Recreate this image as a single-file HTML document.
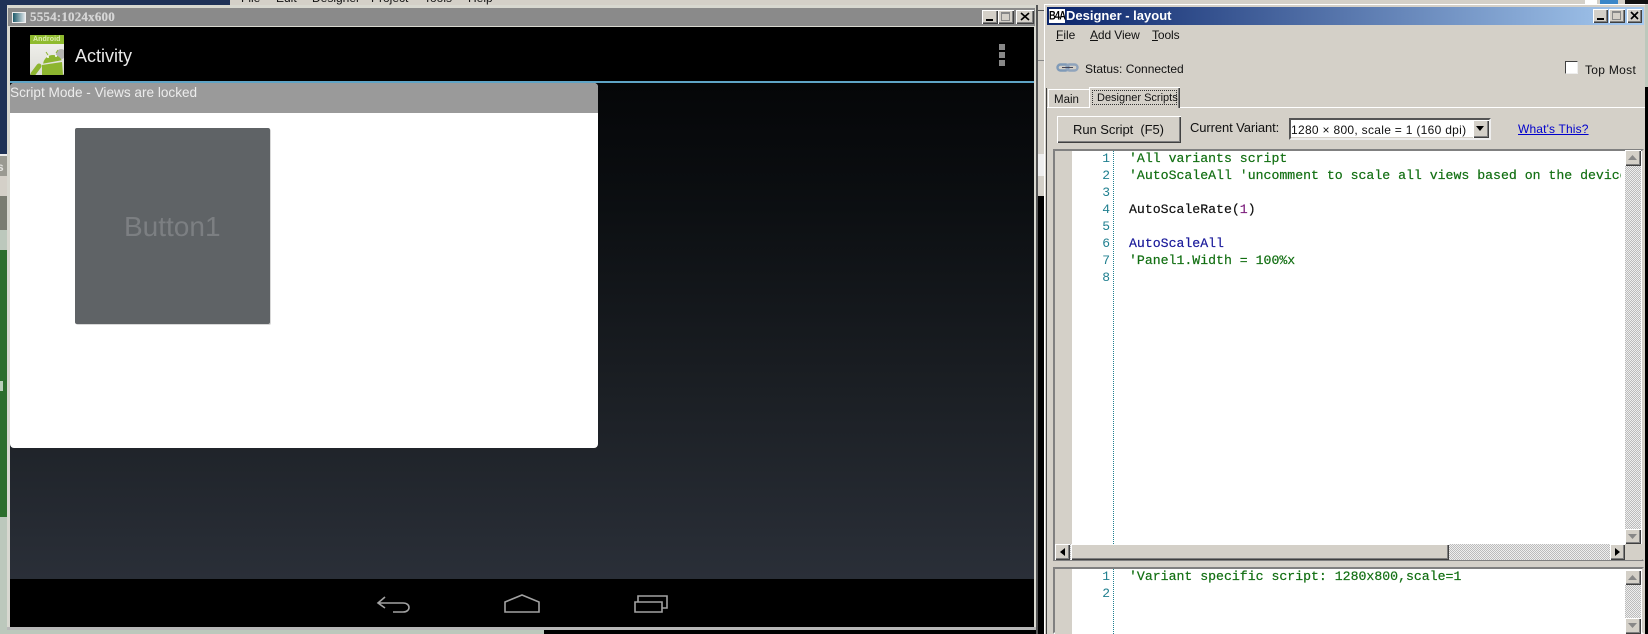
<!DOCTYPE html>
<html><head><meta charset="utf-8"><style>
html,body{margin:0;padding:0;background:#bcc8bc}
body{width:1648px;height:634px;position:relative;overflow:hidden;font-family:"Liberation Sans",sans-serif}
div,span,a,svg{position:absolute;display:block}
span,a{white-space:pre;line-height:14px}
.t{font-size:12px;color:#111;height:14px}
.u{display:inline;position:static;text-decoration:underline}
.r{background:#d4d0c8;box-shadow:inset 1px 1px 0 #fff,inset -1px -1px 0 #404040,inset -2px -2px 0 #808080}
.m{font-family:"Liberation Mono",monospace;font-size:13.2px;line-height:17px;left:1129px;height:17px;-webkit-text-stroke:.2px currentColor}
.n{font-family:"Liberation Mono",monospace;font-size:13px;line-height:17px;width:30px;left:1080px;text-align:right;color:#1f7f8f;height:17px}
.chk{background-color:#eee;background-image:linear-gradient(45deg,#bbb 25%,transparent 25%,transparent 75%,#bbb 75%),linear-gradient(45deg,#bbb 25%,transparent 25%,transparent 75%,#bbb 75%);background-size:2px 2px;background-position:0 0,1px 1px}
</style></head><body>
<!-- background strips -->
<div style="left:0;top:0;width:230px;height:6px;background:#1f3257"></div>
<div style="left:230px;top:0;width:1418px;height:5px;background:#d4d0c8"></div>
<span class="t" style="left:241px;top:-9px;">File</span><span class="t" style="left:276px;top:-9px;">Edit</span><span class="t" style="left:312px;top:-9px;">Designer</span><span class="t" style="left:371px;top:-9px;">Project</span><span class="t" style="left:424px;top:-9px;">Tools</span><span class="t" style="left:468px;top:-9px;">Help</span>
<div style="left:1585px;top:0;width:12px;height:4px;background:#fff"></div>
<div style="left:1600px;top:0;width:18px;height:4px;background:#3a86c8"></div>
<div style="left:1625px;top:0;width:23px;height:4px;background:#111"></div>
<div style="left:0;top:0;width:8px;height:154px;background:#1f3257"></div>
<div style="left:0;top:154px;width:8px;height:2px;background:#eee"></div>
<div style="left:0;top:156px;width:8px;height:20px;background:#9a9a92"></div>
<span style="left:-3px;top:160px;font:bold 12px/14px 'Liberation Sans',sans-serif;color:#e4e4e0;width:11px;overflow:hidden">s</span>
<div style="left:0;top:176px;width:8px;height:20px;background:#d4d0c8"></div>
<div style="left:0;top:196px;width:8px;height:34px;background:#7a7d72"></div>
<div style="left:0;top:230px;width:8px;height:20px;background:#bcc8bc"></div>
<div style="left:0;top:250px;width:8px;height:267px;background:#2c6e2c"></div>
<div style="left:0;top:517px;width:8px;height:117px;background:#bcc8bc"></div>
<div style="left:0;top:381px;width:3px;height:10px;background:#dfe8df;opacity:.8"></div>
<div style="left:544px;top:630px;width:500px;height:4px;background:#000"></div>

<!-- emulator window -->
<div style="left:7px;top:5px;width:1029px;height:625px;background:#d8d8d0"></div>
<div style="left:8px;top:8px;width:1027px;height:18px;background:#8a8a8a"></div>
<div style="left:12px;top:12px;width:14px;height:11px;background:linear-gradient(90deg,#1d5a6a,#dfe6ea);border:1px solid #eee;box-sizing:border-box"></div>
<span style="left:30px;top:10px;font:bold 13px/14px 'Liberation Serif',serif;color:#d6d6d6;letter-spacing:.2px;-webkit-text-stroke:.2px #d6d6d6">5554:1024x600</span>
<div class="r" style="left:982px;top:10px;width:16px;height:14px"><div style="left:4px;top:9px;width:7px;height:2px;background:#000"></div></div>
<div class="r" style="left:998px;top:10px;width:16px;height:14px"><div style="left:3px;top:2px;width:9px;height:9px;border:1px solid #888;border-top-width:2px;box-sizing:border-box"></div></div>
<div class="r" style="left:1016px;top:10px;width:18px;height:14px"><svg style="left:4px;top:2px" width="10" height="9"><path d="M1 1L9 8M9 1L1 8" stroke="#000" stroke-width="1.6"/></svg></div>

<div style="left:10px;top:27px;width:1024px;height:600px;background:#000"></div>
<!-- app icon -->
<div style="left:30px;top:35px;width:34px;height:40px;background:linear-gradient(#f4f4f0,#dcdcd6);border-radius:1px;overflow:hidden">
 <div style="left:0;top:0;width:34px;height:9px;background:#8fbb2e"></div>
 <span style="left:3px;top:0;font:bold 7px/9px 'Liberation Sans';color:#dcecb0;letter-spacing:.1px">Android</span>
 <svg style="left:0;top:9px" width="34" height="31"><circle cx="31" cy="10" r="5" fill="#b4b4b0"/><path d="M13 18a10 10 0 0 1 19 0z" fill="#8db52f" transform="rotate(-10 22 18)"/><path d="M12 21L32 18L33 31H12z" fill="#8db52f"/><path d="M9 22L3 30" stroke="#8db52f" stroke-width="5" stroke-linecap="round"/><circle cx="18" cy="13" r="1" fill="#fff"/><circle cx="26" cy="12" r="1" fill="#fff"/><path d="M16 8l2 3M28 6l-2 3" stroke="#8db52f"/></svg>
</div>
<span style="left:75px;top:45px;font-size:18px;line-height:22px;color:#e8e8e8">Activity</span>
<div style="left:999px;top:44px;width:6px;height:6px;background:#888"></div>
<div style="left:999px;top:52px;width:6px;height:6px;background:#888"></div>
<div style="left:999px;top:60px;width:6px;height:6px;background:#888"></div>
<div style="left:10px;top:81px;width:1024px;height:2px;background:#5fa4c6"></div>
<div style="left:10px;top:83px;width:1024px;height:496px;background:linear-gradient(#050608 0%,#0c0f12 25%,#1a1e23 60%,#2a2f38 100%)"></div>
<!-- panel -->
<div style="left:10px;top:83px;width:588px;height:365px;background:#fff;border-radius:4px;overflow:hidden">
 <div style="left:0;top:0;width:588px;height:30px;background:#9a9a9a"></div>
</div>
<span style="left:10px;top:84px;font-size:13.6px;line-height:18px;color:#ececec">Script Mode - Views are locked</span>
<div style="left:75px;top:128px;width:195px;height:196px;background:#5f6366;border-radius:2px;box-shadow:1px 1px 0 #d8d8d8"></div>
<span style="left:124px;top:211px;font-size:28px;line-height:32px;color:#7c7f82">Button1</span>
<!-- nav -->
<div style="left:10px;top:579px;width:1024px;height:48px;background:#000"></div>
<svg style="left:370px;top:590px" width="310" height="28" fill="none" stroke="#a2a2a2" stroke-width="1.6"><path d="M15 7L8 13L15 18M8 13H33C41 13 41 22 33 22H23"/><path d="M135 12L152 5L169 12V22H135Z"/><path d="M265 12H292V22H265ZM268 12V6H297V18H292"/></svg>
<div style="left:7px;top:627px;width:1029px;height:3px;background:#b8b8b8"></div>

<!-- gap between windows -->
<div style="left:1036px;top:5px;width:2px;height:629px;background:#555"></div>
<div style="left:1038px;top:5px;width:6px;height:191px;background:#d4d0c8"></div>
<div style="left:1038px;top:10px;width:6px;height:1px;background:#555"></div>
<div style="left:1038px;top:60px;width:6px;height:1px;background:#888"></div>
<div style="left:1038px;top:154px;width:6px;height:22px;background:#eee"></div>
<div style="left:1038px;top:196px;width:6px;height:438px;background:#000"></div>

<!-- designer window -->
<div style="left:1044px;top:4px;width:601px;height:630px;background:#d4d0c8;box-shadow:inset 1px 1px 0 #fff"></div>
<div style="left:1645px;top:87px;width:3px;height:547px;background:#000"></div>
<div style="left:1047px;top:7px;width:597px;height:18px;background:linear-gradient(90deg,#0a246a,#a6caf0)"></div>
<div style="left:1049px;top:9px;width:16px;height:14px;background:#fff"></div>
<span style="left:1049px;top:9px;font:bold 11px/14px 'Liberation Sans';color:#000;letter-spacing:-1px;transform-origin:0 50%;transform:scale(.85,1.1)">B4A</span>
<span style="left:1066px;top:9px;font:bold 13px/14px 'Liberation Sans';color:#fff">Designer - layout</span>
<div class="r" style="left:1593px;top:9px;width:15px;height:14px"><div style="left:4px;top:9px;width:7px;height:2px;background:#000"></div></div>
<div class="r" style="left:1609px;top:9px;width:16px;height:14px"><div style="left:3px;top:2px;width:9px;height:9px;border:1px solid #888;border-top-width:2px;box-sizing:border-box"></div></div>
<div class="r" style="left:1627px;top:9px;width:15px;height:14px"><svg style="left:3px;top:2px" width="9" height="9"><path d="M1 1L8 8M8 1L1 8" stroke="#000" stroke-width="1.6"/></svg></div>

<span class="t" style="left:1056px;top:28px"><span class="u">F</span>ile</span>
<span class="t" style="left:1090px;top:28px;letter-spacing:-.1px"><span class="u">A</span>dd View</span>
<span class="t" style="left:1152px;top:28px;letter-spacing:-.1px"><span class="u">T</span>ools</span>
<svg style="left:1056px;top:62px" width="24" height="12" fill="none"><rect x="1.5" y="2.5" width="11" height="6" rx="3" stroke="#7f9ab8" stroke-width="2.4"/><rect x="10.5" y="2.5" width="11" height="6" rx="3" stroke="#90a4bc" stroke-width="2.4"/><path d="M6 5.5H17" stroke="#445" stroke-width="1"/></svg>
<span class="t" style="left:1085px;top:62px">Status: Connected</span>
<div style="left:1565px;top:61px;width:13px;height:13px;background:#fff;box-sizing:border-box;border:1px solid;border-color:#404040 #eee #eee #404040"></div>
<span class="t" style="left:1585px;top:63px;letter-spacing:.3px">Top Most</span>

<!-- tabs -->
<div style="left:1046px;top:107px;width:599px;height:1px;background:#fff"></div>
<div style="left:1046px;top:88px;width:1px;height:546px;background:#404040"></div>
<div style="left:1048px;top:89px;width:41px;height:18px;box-shadow:inset 1px 1px 0 #fff"></div>
<span class="t" style="left:1054px;top:93px;font-size:11.5px">Main</span>
<div style="left:1089px;top:87px;width:91px;height:21px;background:#d4d0c8;box-shadow:inset 1px 1px 0 #fff,inset -1px 0 0 #404040,inset -2px 0 0 #808080"></div>
<div style="left:1092px;top:90px;width:85px;height:15px;border:1px dotted #333;box-sizing:border-box"></div>
<span class="t" style="left:1097px;top:91px;font-size:11px">Designer Scripts</span>

<!-- toolbar -->
<div class="r" style="left:1057px;top:116px;width:124px;height:27px"></div>
<span class="t" style="left:1073px;top:123px;font-size:13px;letter-spacing:-.05px">Run Script  (F5)</span>
<span class="t" style="left:1190px;top:121px;font-size:13px;letter-spacing:-.1px">Current Variant:</span>
<div style="left:1289px;top:118px;width:202px;height:22px;background:#fff;box-sizing:border-box;border:2px solid;border-color:#555 #eee #eee #555;box-shadow:inset -1px -1px 0 #d4d0c8"></div>
<span class="t" style="left:1291px;top:123px;font-size:12px;letter-spacing:.3px">1280 × 800, scale = 1 (160 dpi)</span>
<div class="r" style="left:1473px;top:120px;width:16px;height:18px"><svg style="left:3px;top:6px" width="9" height="6"><path d="M0 0H8L4 5Z" fill="#000"/></svg></div>
<a class="t" style="left:1518px;top:122px;color:#0000cc;text-decoration:underline;letter-spacing:.15px">What's This?</a>

<!-- main editor -->
<div style="left:1053px;top:149px;width:591px;height:412px;background:#fff;box-sizing:border-box;border:2px solid;border-color:#808080 #d4d0c8 #808080 #808080"></div>
<div style="left:1055px;top:151px;width:17px;height:393px;background:#d4d0c8"></div>
<div style="left:1113px;top:151px;width:0;height:393px;border-left:1px dotted #1f7f8f"></div>
<span class="n" style="top:150px">1</span><span class="n" style="top:167px">2</span><span class="n" style="top:184px">3</span><span class="n" style="top:201px">4</span><span class="n" style="top:218px">5</span><span class="n" style="top:235px">6</span><span class="n" style="top:252px">7</span><span class="n" style="top:269px">8</span>
<span class="m" style="top:150px;color:#126f12">'All variants script</span>
<span class="m" style="top:167px;color:#126f12;width:492px;overflow:hidden">'AutoScaleAll 'uncomment to scale all views based on the device</span>
<span class="m" style="top:201px;color:#111">AutoScaleRate(<span style="position:static;display:inline;color:#7a1a7a">1</span>)</span>
<span class="m" style="top:235px;color:#1a1a9a">AutoScaleAll</span>
<span class="m" style="top:252px;color:#126f12">'Panel1.Width = 100%x</span>
<!-- v scroll -->
<div class="chk" style="left:1625px;top:151px;width:16px;height:392px"></div>
<div class="r" style="left:1625px;top:150px;width:16px;height:16px"><svg style="left:3px;top:5px" width="10" height="6"><path d="M0 5H9L4.5 0Z" fill="#888"/></svg></div>
<div class="r" style="left:1625px;top:529px;width:16px;height:15px"><svg style="left:3px;top:5px" width="10" height="6"><path d="M0 0H9L4.5 5Z" fill="#888"/></svg></div>
<!-- h scroll -->
<div class="chk" style="left:1055px;top:544px;width:570px;height:16px"></div>
<div style="left:1625px;top:544px;width:17px;height:16px;background:#d4d0c8"></div>
<div class="r" style="left:1055px;top:544px;width:15px;height:16px"><svg style="left:5px;top:4px" width="6" height="9"><path d="M5 0V8L0 4Z" fill="#000"/></svg></div>
<div class="r" style="left:1071px;top:544px;width:378px;height:16px"></div>
<div class="r" style="left:1610px;top:544px;width:15px;height:16px"><svg style="left:5px;top:4px" width="6" height="9"><path d="M0 0V8L5 4Z" fill="#000"/></svg></div>

<!-- second editor -->
<div style="left:1053px;top:567px;width:591px;height:67px;background:#fff;box-sizing:border-box;border:2px solid;border-color:#808080 #d4d0c8 transparent #808080"></div>
<div style="left:1055px;top:569px;width:17px;height:65px;background:#d4d0c8"></div>
<div style="left:1113px;top:569px;width:0;height:65px;border-left:1px dotted #1f7f8f"></div>
<span class="n" style="top:568px">1</span><span class="n" style="top:585px">2</span>
<span class="m" style="top:568px;color:#126f12">'Variant specific script: 1280x800,scale=1</span>
<div class="chk" style="left:1625px;top:570px;width:16px;height:64px"></div>
<div class="r" style="left:1625px;top:570px;width:16px;height:15px"><svg style="left:3px;top:5px" width="10" height="6"><path d="M0 5H9L4.5 0Z" fill="#888"/></svg></div>
<div class="r" style="left:1625px;top:618px;width:16px;height:16px"><svg style="left:3px;top:5px" width="10" height="6"><path d="M0 0H9L4.5 5Z" fill="#888"/></svg></div>
</body></html>
